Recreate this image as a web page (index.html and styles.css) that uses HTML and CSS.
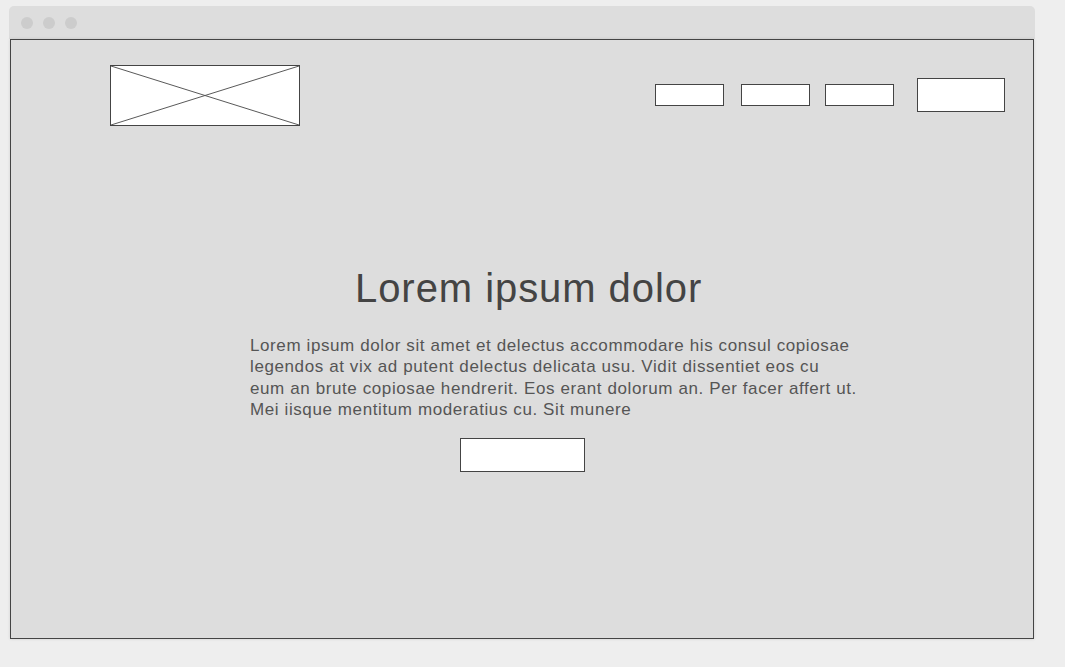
FILE: index.html
```html
<!DOCTYPE html>
<html lang="en">
<head>
<meta charset="utf-8">
<title>Wireframe</title>
<link rel="stylesheet" href="styles.css">
</head>
<body>
<div class="window">
  <div class="titlebar">
    <span class="dot"></span><span class="dot"></span><span class="dot"></span>
  </div>
  <div class="viewport">
    <header class="header">
      <div class="logo">
        <svg width="190" height="61" viewBox="0 0 190 61" preserveAspectRatio="none">
          <line x1="0" y1="0" x2="190" y2="61" stroke="#555" stroke-width="1"/>
          <line x1="0" y1="61" x2="190" y2="0" stroke="#555" stroke-width="1"/>
        </svg>
      </div>
      <nav class="nav">
        <span class="nav-link"></span>
        <span class="nav-link nav-link-2"></span>
        <span class="nav-link nav-link-3"></span>
        <span class="nav-cta"></span>
      </nav>
    </header>
    <main class="hero">
      <h1 class="hero-title">Lorem ipsum dolor</h1>
      <p class="hero-text">Lorem ipsum dolor sit amet et delectus accommodare his consul copiosae legendos at vix ad putent delectus delicata usu. Vidit dissentiet eos cu eum an brute copiosae hendrerit. Eos erant dolorum an. Per facer affert ut. Mei iisque mentitum moderatius cu. Sit munere</p>
      <span class="hero-button"></span>
    </main>
  </div>
</div>
</body>
</html>
```
FILE: styles.css
```css
* { box-sizing: border-box; }

html, body {
  margin: 0;
  padding: 0;
}

body {
  background: #eeeeee;
  font-family: "Liberation Sans", Arial, sans-serif;
  padding: 6px 0 0 10px;
  height: 667px;
  overflow: hidden;
}

.window {
  width: 1024px;
}

.titlebar {
  height: 33px;
  background: #dddddd;
  border-radius: 5px 5px 0 0;
  display: flex;
  align-items: center;
  gap: 10px;
  padding: 0 0 0 12px;
  margin-left: -1px;
  margin-right: -1px;
}

.dot {
  width: 12px;
  height: 12px;
  border-radius: 50%;
  background: #cccccc;
}

.viewport {
  height: 600px;
  background: #dddddd;
  border: 1px solid #444444;
  box-shadow: 0 0 3px rgba(0, 0, 0, 0.12);
}

.header {
  display: flex;
  align-items: flex-start;
  padding: 25px 28px 0 99px;
}

.logo {
  width: 190px;
  height: 61px;
  border: 1px solid #444444;
  background: #ffffff;
  overflow: hidden;
}

.logo svg {
  display: block;
  width: 100%;
  height: 100%;
}

.nav {
  margin: 13px 0 0 auto;
  display: flex;
  align-items: center;
}

.nav-link {
  width: 69px;
  height: 22px;
  border: 1px solid #444444;
  background: #ffffff;
}

.nav-link-2 { margin-left: 17px; }
.nav-link-3 { margin-left: 15px; }

.nav-cta {
  width: 88px;
  height: 34px;
  margin-left: 23px;
  border: 1px solid #444444;
  background: #ffffff;
}

.hero {
  display: flex;
  flex-direction: column;
  align-items: flex-start;
  padding: 0 0 0 239px;
}

.hero-title {
  margin: 142px 0 0 105px;
  font-size: 40px;
  line-height: 40px;
  font-weight: normal;
  letter-spacing: 0.94px;
  color: #444444;
}

.hero-text {
  width: 608px;
  margin: 27px 0 0 0;
  font-size: 17px;
  line-height: 21.33px;
  letter-spacing: 0.6px;
  color: #555555;
}

.hero-button {
  width: 125px;
  height: 34px;
  margin: 18px 0 0 210px;
  border: 1px solid #444444;
  background: #ffffff;
}
```
